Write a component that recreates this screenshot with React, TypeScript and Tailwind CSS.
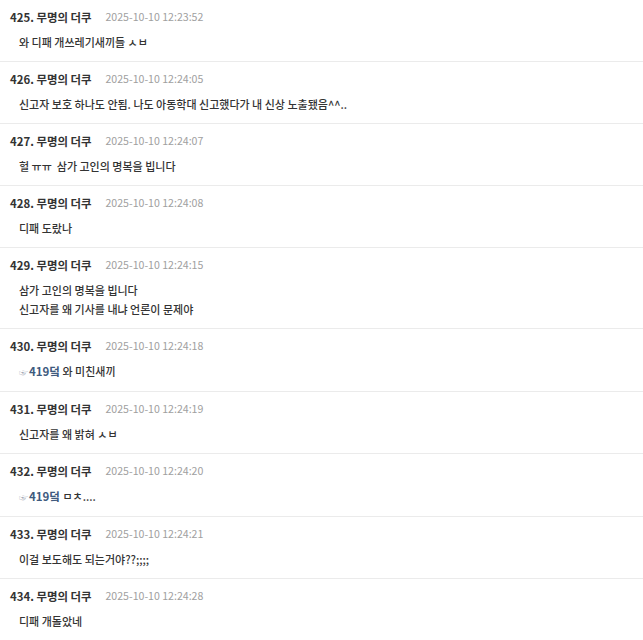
import React from "react";

type Item = { n: number; time: string; lines: React.ReactNode[] };

const Ref = ({ t }: { t: string }) => (
  <>
    <span className="text-[9px] text-[#9aa3b0] mr-[1px]">☞</span>
    <span className="font-bold text-[#3e5a7e] text-[11.5px]">{t}</span>
  </>
);

const items: Item[] = [
  { n: 425, time: "2025-10-10 12:23:52", lines: ["와 디패 개쓰레기새끼들 ㅅㅂ"] },
  { n: 426, time: "2025-10-10 12:24:05", lines: ["신고자 보호 하나도 안됨. 나도 아동학대 신고했다가 내 신상 노출됐음^^.."] },
  { n: 427, time: "2025-10-10 12:24:07", lines: ["헐 ㅠㅠ  삼가 고인의 명복을 빕니다"] },
  { n: 428, time: "2025-10-10 12:24:08", lines: ["디패 도랐나"] },
  { n: 429, time: "2025-10-10 12:24:15", lines: ["삼가 고인의 명복을 빕니다", "신고자를 왜 기사를 내냐 언론이 문제야"] },
  { n: 430, time: "2025-10-10 12:24:18", lines: [<><Ref t="419덬" /> 와 미친새끼</>] },
  { n: 431, time: "2025-10-10 12:24:19", lines: ["신고자를 왜 밝혀 ㅅㅂ"] },
  { n: 432, time: "2025-10-10 12:24:20", lines: [<><Ref t="419덬" /> ㅁㅊ....</>] },
  { n: 433, time: "2025-10-10 12:24:21", lines: ["이걸 보도해도 되는거야??;;;;"] },
  { n: 434, time: "2025-10-10 12:24:28", lines: ["디패 개돌았네"] },
];

export default function App() {
  return (
    <div
      className="w-[643px] h-[640px] overflow-hidden bg-white"
      style={{ fontFamily: '"Noto Sans CJK KR", "Noto Sans", sans-serif' }}
    >
      {items.map((it) => (
        <div key={it.n} className="border-b border-[#ebebeb] pt-[9px] pb-[9px]">
          <div className="flex items-center h-[16px] pl-[10px]">
            <span className="text-[11.4px] font-bold text-[#333] leading-[16px]">
              {it.n}. 무명의 더쿠
            </span>
            <span className="ml-[14px] text-[10.6px] text-[#a0a0a0] leading-[16px]">{it.time}</span>
          </div>
          <div className="mt-[8px] pl-[19px] text-[11px] font-medium text-[#333] leading-[19px] whitespace-pre">
            {it.lines.map((l, i) => (
              <div key={i}>{l}</div>
            ))}
          </div>
        </div>
      ))}
    </div>
  );
}
